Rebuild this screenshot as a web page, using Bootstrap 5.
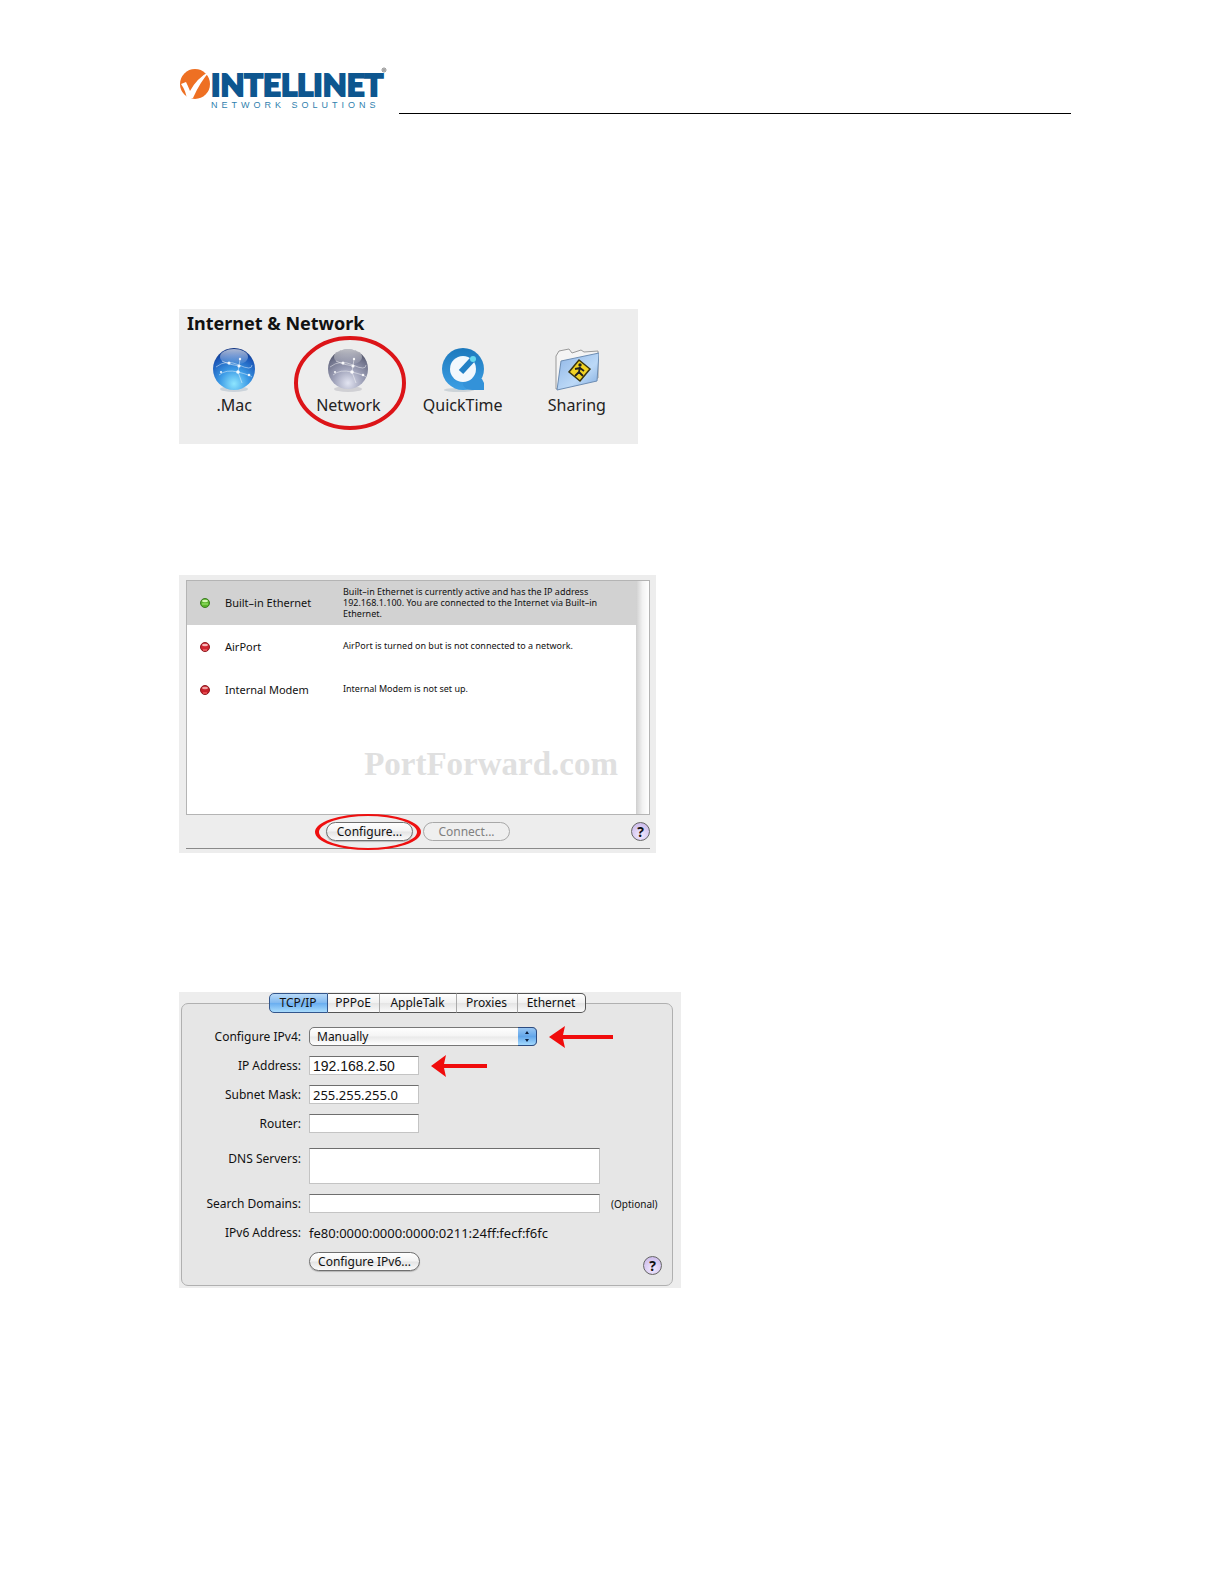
<!DOCTYPE html>
<html lang="en">
<head>
<meta charset="utf-8">
<meta name="viewport" content="width=device-width, initial-scale=1">
<title>Intellinet Network Solutions – Mac network setup</title>
<link href="https://cdn.jsdelivr.net/npm/bootstrap@5.3.0/dist/css/bootstrap.min.css" rel="stylesheet">
<style>
  body { background: #fff; color: #111; font-family: "Noto Sans", "Open Sans", sans-serif; font-size: 12px; line-height: 16px; }
  .sheet { padding: 66px 153px 200px 179px; }
  .sheet-head { height: 48px; margin-bottom: 195px; }
  .head-rule { border-bottom: 1px solid #000; margin-left: 8px; }
  .brand-art { display: block; width: 212px; height: 44px; }
  .brand-name { font: 900 31px Lato, "Liberation Sans", sans-serif; fill: #0d568f; stroke: #0d568f; stroke-width: 2; }
  .brand-tag { font: 9px "Liberation Sans", sans-serif; letter-spacing: 4px; fill: #2f7fae; }

  .pane { background: #ededed; width: 100%; }
  .pane-prefs { max-width: 459px; min-height: 135px; padding: 5px 4px 0 0; margin-bottom: 131px; }
  .pane-status { max-width: 477px; padding: 5px 6px 4px 7px; margin-bottom: 139px; }
  .pane-tcp { max-width: 502px; padding: 11px 8px 2px 2px; }

  /* preference icons */
  .prefs-title { font-size: 18px; line-height: 18px; font-weight: 700; margin: 0 0 2px 8px; }
  .prefs-nav { margin-left: -2px; }
  .pref { flex: 1 1 0; color: #222; font-size: 16px; line-height: 20px; text-decoration: none; text-align: center; position: relative; padding-top: 13px; }
  .pref svg.pic { display: block; margin: 0 auto 2px; width: 44px; height: 46px; }
  .pref .ring { position: absolute; left: 2px; top: 1px; width: 114px; height: 96px; }

  /* connection status */
  .status-list { background: #fff; border: 1px solid #b4b4b4; height: 235px; }
  .status-row { height: 43px; padding: 0 8px 0 13px; }
  .status-row.active { background: #d2d2d2; height: 44px; }
  .status-row svg { width: 10px; height: 10px; flex: none; }
  .status-name { width: 118px; margin-left: 15px; flex: none; font-size: 11px; }
  .status-text { font-size: 9px; line-height: 11px; padding-bottom: 2px; }
  .scroll-track { width: 13px; flex: none; background: linear-gradient(90deg, #cfcfcf, #f2f2f2 50%, #fff); }
  .watermark { font: bold 33px/36px "Liberation Serif", serif; color: #e0e0e0; margin: 0 18px 32px 0; }
  .status-foot { height: 34px; border-bottom: 1px solid #8a8a8a; position: relative; padding-left: 140px; }
  .aqua { border: 1px solid #6f6f6f; border-radius: 10px; height: 19px; padding: 0; font-size: 12px; line-height: 15px; color: #111; background: linear-gradient(#fff, #f3f3f3 48%, #e4e4e4 52%, #fbfbfb); box-shadow: 0 1px 1px #b5b5b5; }
  .aqua:disabled { color: #808080; border-color: #a8a8a8; background: #efefef; box-shadow: none; }
  .w-act { width: 87px; margin-right: 10px; }
  .w-v6 { width: 111px; }
  .help { width: 19px; height: 19px; padding: 0; border: 1px solid #666; border-radius: 50%; background: radial-gradient(circle at 50% 70%, #f2eaff, #c3b0e6); font-size: 14px; line-height: 16px; font-weight: 700; color: #111; }
  .ring-btn { position: absolute; left: 128px; top: -1px; width: 108px; height: 36px; pointer-events: none; }

  /* TCP/IP form */
  .tcp-box { background: #e6e6e6; border: 1px solid #b0b0b0; border-radius: 7px; height: 283px; }
  .tabs { margin-top: -11px; margin-bottom: 14px; }
  .tabs button { height: 20px; padding: 0; border: solid #555; border-width: 1px 0; border-right: 1px solid #aaa; background: linear-gradient(#fff, #f1f1f1 48%, #e5e5e5 52%, #fafafa); font-size: 12px; line-height: 16px; color: #111; }
  .tabs button:first-child { border-left: 1px solid #33568c; border-radius: 5px 0 0 5px; }
  .tabs button:last-child { border-right-color: #555; border-radius: 0 5px 5px 0; }
  .tabs button.active { border-color: #33568c; background: linear-gradient(#b9daf8, #7fb8f0 50%, #6aaef0 52%, #a9dcfd); }
  .t1 { width: 59px; } .t2 { width: 52px; } .t3 { width: 77px; } .t4 { width: 61px; } .t5 { width: 68px; }
  .line { height: 19px; margin-bottom: 10px; padding-right: 10px; }
  .line-dns { height: 36px; margin-top: 15px; }
  .line-dns > label { padding-top: 3px; }
  .line > label, .line > .cap { width: 119px; flex: none; text-align: right; margin-right: 8px; }
  .field { border: 1px solid #c4c4c4; border-top: 1px solid #6e6e6e; border-radius: 0; background: #fff; height: 19px; padding: 0 3px; font-size: 13px; line-height: 16px; color: #111; resize: none; }
  .field-ip { width: 110px; }
  .field-wide { width: 291px; }
  .field-dns { height: 36px; }
  .arial { font-family: "Liberation Sans", sans-serif; font-size: 14px; }
  .v6-value { font-size: 13px; }
  .pick { width: 228px; position: relative; }
  .pick select { appearance: none; display: block; width: 100%; height: 19px; border: 1px solid #777; border-radius: 5px; padding: 0 7px; font-size: 12px; line-height: 16px; color: #111; background: linear-gradient(#fff, #f4f4f4 48%, #e9e9e9 52%, #fff); }
  .pick svg { position: absolute; right: 0; top: 0; width: 19px; height: 19px; pointer-events: none; }
  .arrow { margin-left: 12px; flex: none; }
  .opt { font-size: 10px; margin-left: 11px; }
</style>
<script src="https://cdn.jsdelivr.net/npm/bootstrap@5.3.0/dist/js/bootstrap.bundle.min.js"></script>
</head>
<body>
<div class="sheet">
  <header class="sheet-head d-flex">
    <svg class="brand-art flex-shrink-0" viewBox="0 0 212 44" role="img" aria-label="Intellinet Network Solutions">
      <circle cx="16" cy="18" r="15" fill="#ee7023"/>
      <path d="M2 18 L7 16 Q9 20 11 25 Q18 12 31 5 Q21 16 14 32 L8 34 Q7 25 2 18Z" fill="#fff"/>
      <text class="brand-name" x="32" y="30">INTELLINET</text>
      <text class="brand-tag" x="32" y="42">NETWORK SOLUTIONS</text>
      <circle cx="205" cy="4" r="2" fill="none" stroke="#888"/><circle cx="205" cy="4" r="1" fill="#888"/>
    </svg>
    <div class="head-rule flex-grow-1"></div>
  </header>

  <main>
    <section class="pane pane-prefs">
      <h2 class="prefs-title">Internet &amp; Network</h2>
      <nav class="prefs-nav d-flex">
        <a class="pref" href="#mac">
          <svg class="pic" viewBox="0 0 44 46">
            <defs>
              <radialGradient id="gb" cx=".5" cy=".85" r=".85"><stop offset="0" stop-color="#8ee6ff"/><stop offset=".4" stop-color="#3d9be6"/><stop offset=".8" stop-color="#1b57b8"/><stop offset="1" stop-color="#0c2f7d"/></radialGradient>
              <radialGradient id="gg" cx=".5" cy=".85" r=".85"><stop offset="0" stop-color="#e3e5f2"/><stop offset=".4" stop-color="#a2a5bc"/><stop offset=".8" stop-color="#6d7088"/><stop offset="1" stop-color="#44465a"/></radialGradient>
              <linearGradient id="gl" x2="0" y2="1"><stop offset="0" stop-color="#fff" stop-opacity=".65"/><stop offset="1" stop-color="#fff" stop-opacity=".05"/></linearGradient>
              <g id="net"><ellipse cx="22" cy="10" rx="14" ry="8" fill="url(#gl)"/><path d="M4 20 Q14 12 27 18 T40 18 M10 14 L17 17 L27 19 L26 25 M7 28 Q14 22 26 25 T40 30 M27 19 L28 12 M26 25 L30 36" fill="none" stroke="#fff" stroke-opacity=".5" stroke-width=".9"/><g fill="#fff" fill-opacity=".9"><circle cx="17" cy="16" r="1.5"/><circle cx="27" cy="19" r="1.6"/><circle cx="26" cy="25" r="1.8"/><circle cx="9" cy="25" r="1.1"/><circle cx="37" cy="28" r="1.3"/><circle cx="28" cy="12" r="1.2"/></g></g>
            </defs>
            <ellipse cx="22" cy="42" rx="14" ry="3" fill="#cbd3da"/><circle cx="22" cy="22" r="21" fill="url(#gb)"/><use href="#net"/>
          </svg>.Mac</a>
        <a class="pref" href="#network">
          <svg class="pic" viewBox="0 0 44 46"><ellipse cx="22" cy="42" rx="14" ry="3" fill="#d0d0d4"/><circle cx="22" cy="22" r="20" fill="url(#gg)"/><use href="#net"/></svg>Network
          <svg class="ring" viewBox="0 0 114 96"><ellipse cx="57" cy="48" rx="54" ry="45" fill="none" stroke="#dc1418" stroke-width="4"/></svg></a>
        <a class="pref" href="#quicktime">
          <svg class="pic" viewBox="0 0 44 46">
            <defs><linearGradient id="gq" x2="0" y2="1"><stop offset="0" stop-color="#1c79bd"/><stop offset="1" stop-color="#3d9fe4"/></linearGradient></defs>
            <ellipse cx="18" cy="43" rx="15" ry="2" fill="#ccd3d8"/>
            <circle cx="22" cy="22" r="21" fill="url(#gq)"/><path d="M23 30 L41 32 L43 36 V43 H31 Q24 43 22 38Z" fill="#3392d9"/>
            <circle cx="22" cy="22" r="13" fill="#f2f8fd"/><path d="M20 25 L32 12" stroke="#2381c6" stroke-width="6"/><circle cx="32" cy="12" r="3" fill="#65d8ee"/>
          </svg>QuickTime</a>
        <a class="pref" href="#sharing">
          <svg class="pic" viewBox="0 0 44 46">
            <defs><linearGradient id="gf" x2="1" y2="1"><stop offset="0" stop-color="#8db4e6"/><stop offset=".6" stop-color="#bcd9f7"/><stop offset="1" stop-color="#7ea9dd"/></linearGradient></defs>
            <path d="M1 42 V9 L4 4 L14 2 L17 6 L26 3 L29 5 L43 4 V31Z" fill="#f4f4f4" stroke="#999"/>
            <path d="M2 43 L6 14 L44 6 L42 34Z" fill="url(#gf)" stroke="#6d8db3"/>
            <path d="M24 13 L35 22 L25 34 L14 25Z" fill="#f2d324" stroke="#3b3510" stroke-width="1.5"/>
            <circle cx="25" cy="18" r="1.7" fill="#222"/><path d="M25 20 L24 25 L20 29 M24 25 L28 29 M20 22 L25 21 L29 24" fill="none" stroke="#222" stroke-width="1.8"/>
          </svg>Sharing</a>
      </nav>
    </section>

    <section class="pane pane-status">
      <div class="status-list d-flex">
        <div class="flex-grow-1 d-flex flex-column">
          <div class="status-row active d-flex align-items-center">
            <svg viewBox="0 0 10 10"><circle cx="5" cy="5" r="4.5" fill="#59b52a" stroke="#3c7a25"/><ellipse cx="5" cy="3" rx="3" ry="1.3" fill="#d3f5b5"/><path d="M2 6H8" stroke="#a7ea76"/></svg>
            <span class="status-name">Built–in Ethernet</span>
            <span class="status-text">Built–in Ethernet is currently active and has the IP address<br>192.168.1.100. You are connected to the Internet via Built–in<br>Ethernet.</span>
          </div>
          <div class="status-row d-flex align-items-center">
            <svg viewBox="0 0 10 10"><circle cx="5" cy="5" r="4.5" fill="#d02530" stroke="#8d1c22"/><ellipse cx="5" cy="3" rx="3" ry="1.3" fill="#f7b9b9"/><path d="M3 8H7" stroke="#ff8585"/></svg>
            <span class="status-name">AirPort</span>
            <span class="status-text">AirPort is turned on but is not connected to a network.</span>
          </div>
          <div class="status-row d-flex align-items-center">
            <svg viewBox="0 0 10 10"><circle cx="5" cy="5" r="4.5" fill="#c8202a" stroke="#8d1c22"/><ellipse cx="5" cy="3" rx="3" ry="1.3" fill="#f0a5a5"/><path d="M3 8H7" stroke="#ff7070"/></svg>
            <span class="status-name">Internal Modem</span>
            <span class="status-text">Internal Modem is not set up.</span>
          </div>
          <div class="watermark mt-auto text-end">PortForward.com</div>
        </div>
        <div class="scroll-track"></div>
      </div>
      <div class="status-foot d-flex align-items-center">
        <button type="button" class="aqua w-act">Configure...</button>
        <button type="button" class="aqua w-act" disabled>Connect...</button>
        <button type="button" class="help ms-auto" aria-label="Help">?</button>
        <svg class="ring-btn" viewBox="0 0 108 36"><path fill="#ee1010" fill-rule="evenodd" d="M54 0 A53 18 0 0 1 54 36 A53 18 0 0 1 54 0Z M54 2 A49 16 0 0 0 54 34 A49 16 0 0 0 54 2Z"/></svg>
      </div>
    </section>

    <section class="pane pane-tcp">
      <form class="tcp-box">
        <div class="tabs d-flex justify-content-center">
          <button type="button" class="t1 active">TCP/IP</button><button type="button" class="t2">PPPoE</button><button type="button" class="t3">AppleTalk</button><button type="button" class="t4">Proxies</button><button type="button" class="t5">Ethernet</button>
        </div>
        <div class="line d-flex align-items-center">
          <label for="v4">Configure IPv4:</label>
          <div class="pick">
            <select id="v4"><option>Manually</option><option>Using DHCP</option></select>
            <svg viewBox="0 0 19 19"><defs><linearGradient id="gs" x2="0" y2="1"><stop offset="0" stop-color="#9cc8f3"/><stop offset=".5" stop-color="#62a6ea"/><stop offset="1" stop-color="#a6dcff"/></linearGradient></defs><path d="M0 .5H14Q18.500 .5 18.500 5V14Q18.500 18.500 14 18.500H0Z" fill="url(#gs)"/><path d="M0 .5H14Q18.500 .5 18.500 5V14Q18.500 18.500 14 18.500H0" fill="none" stroke="#2c4b80"/><path d="M9 4L11 7H7ZM9 15L11 12H7Z" fill="#0a1c3c"/></svg>
          </div>
          <svg class="arrow" width="64" height="22" viewBox="0 0 64 22"><path d="M0 11L16 0L14 9H64V13H14L16 22Z" fill="#f00c0c"/></svg>
        </div>
        <div class="line d-flex align-items-center">
          <label for="ip">IP Address:</label>
          <input class="field field-ip arial" id="ip" type="text" value="192.168.2.50">
          <svg class="arrow" width="56" height="22" viewBox="0 0 56 22"><path d="M0 11L15 0L13 9H56V13H13L15 22Z" fill="#f00c0c"/></svg>
        </div>
        <div class="line d-flex align-items-center">
          <label for="mask">Subnet Mask:</label>
          <input class="field field-ip" id="mask" type="text" value="255.255.255.0">
        </div>
        <div class="line d-flex align-items-center">
          <label for="router">Router:</label>
          <input class="field field-ip" id="router" type="text">
        </div>
        <div class="line line-dns d-flex">
          <label for="dns">DNS Servers:</label>
          <textarea class="field field-wide field-dns" id="dns"></textarea>
        </div>
        <div class="line d-flex align-items-center">
          <label for="search">Search Domains:</label>
          <input class="field field-wide" id="search" type="text">
          <span class="opt">(Optional)</span>
        </div>
        <div class="line d-flex align-items-center">
          <span class="cap">IPv6 Address:</span>
          <span class="v6-value">fe80:0000:0000:0000:0211:24ff:fecf:f6fc</span>
        </div>
        <div class="line d-flex">
          <span class="cap"></span>
          <button type="button" class="aqua w-v6">Configure IPv6...</button>
          <button type="button" class="help ms-auto mt-1" aria-label="Help">?</button>
        </div>
      </form>
    </section>
  </main>
</div>
</body>
</html>
